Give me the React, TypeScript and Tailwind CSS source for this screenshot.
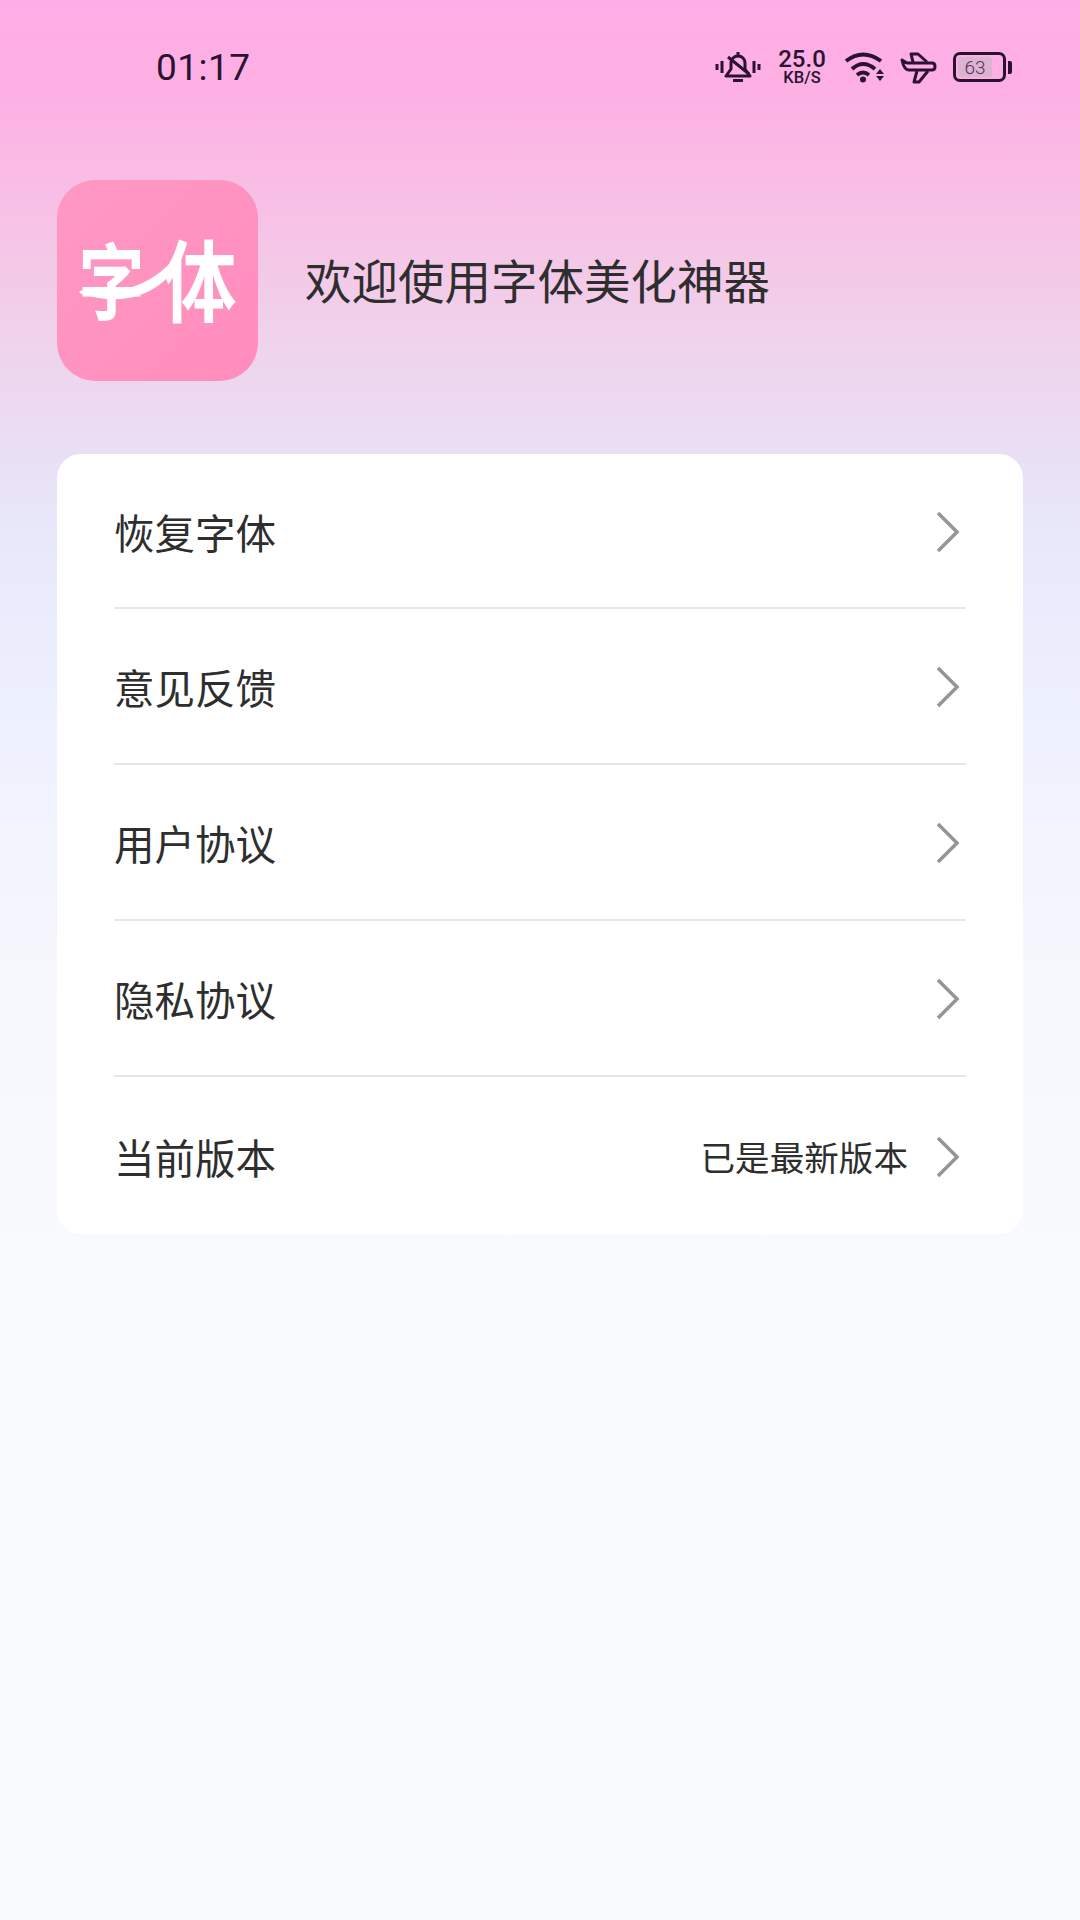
import React from 'react';

const cjk = { fontFamily: '"Noto Sans CJK SC", "Noto Sans", sans-serif' };

const Chevron = () => (
  <svg width="26" height="44" viewBox="0 0 26 44" fill="none" className="shrink-0">
    <path d="M3 3 L22 22 L3 41" stroke="#959595" strokeWidth="3.5" />
  </svg>
);

const rows = ['恢复字体', '意见反馈', '用户协议', '隐私协议'];

const Row = ({ label, value, className }: { label: string; value?: string; className: string }) => (
  <div className={`flex items-center justify-between pt-[3px] ${className}`}>
    <span className="text-[40.5px] leading-none text-[#2e2e2e]">{label}</span>
    <div className="flex items-center gap-[27px] pr-[5px]">
      {value && <span className="text-[34.6px] leading-none text-[#2e2e2e]">{value}</span>}
      <Chevron />
    </div>
  </div>
);

const StatusIcons = () => (
  <div className="flex items-center text-[#2a1330]">
    {/* muted bell */}
    <svg width="47" height="32" viewBox="0 0 47 32" fill="none" stroke="#2a1330" strokeWidth="3">
      <path d="M3 13v6M8 10v12M40 10v12M45 13v6" />
      <path d="M12 25h24l-5-7v-6c0-4-3-7-7-7s-7 3-7 7v6z" strokeLinejoin="round" />
      <path d="M14 6 L35 23" />
      <path d="M24 1v3M19 29.500h10" />
    </svg>
    <div className="ml-[16px] flex w-[50px] flex-col items-center font-['Roboto',sans-serif]">
      <span className="text-[24px] leading-[19px] font-medium">25.0</span>
      <span className="mt-[2px] text-[16.500px] leading-[14px] font-medium">KB/S</span>
    </div>
    {/* wifi */}
    <svg className="ml-[17px]" width="41" height="34" viewBox="0 0 41 34" fill="none" stroke="#2a1330" strokeWidth="4">
      <path d="M2 11Q19 -2 37 11" />
      <path d="M8 19Q19 9 31 19" />
      <path d="M13 25Q19 20 25 25" />
      <circle cx="19" cy="29.500" r="3" fill="#2a1330" stroke="none" />
      <path d="M32 24l4-5 4 5zM32 26l4 5 4-5z" fill="#2a1330" stroke="none" />
    </svg>
    {/* airplane */}
    <svg className="ml-[15px]" width="38" height="34" viewBox="0 0 38 34" fill="none" stroke="#2a1330" strokeWidth="3" strokeLinejoin="round">
      <path d="M2 10l5 3h25c4 0 4 7 0 7H9c-4 0-6-5-7-10z" />
      <path d="M13 12L11 4h7l9 8" />
      <path d="M17 21l-3 11h5l9-11" />
    </svg>
    {/* battery */}
    <div className="ml-[15px] flex items-center">
      <div className="flex h-[30px] w-[53px] items-center rounded-[7px] border-[3px] border-[#2a1330] p-[2px]">
        <div className="flex h-full w-[34px] items-center justify-center rounded-[2px] bg-[#dcb4d2] font-['Roboto',sans-serif] text-[19px] leading-none font-light text-[#5a2c58]">
          63
        </div>
      </div>
      <div className="ml-[2px] h-[13px] w-[4px] rounded-r-[2px] bg-[#2a1330]" />
    </div>
  </div>
);

export default function App() {
  return (
    <div
      style={cjk}
      className="flex h-[1920px] w-[1080px] flex-col overflow-hidden bg-[linear-gradient(180deg,#ffade6_0%,#fdb0e4_5%,#f6c4e6_12%,#efd3ec_18%,#e9e0f6_24%,#e8e8fb_28%,#eef1fe_38%,#f6f7fd_50%,#fafbfd_70%,#f9fbfd_100%)]"
    >
      <div className="flex h-[134px] items-center justify-between pl-[156px] pr-[68px]">
        <span className="font-['Roboto',sans-serif] text-[37px] leading-none tracking-[0.5px] text-[#2a1330]">01:17</span>
        <StatusIcons />
      </div>

      <div className="mt-[46px] flex items-center px-[57px]">
        <div className="relative flex h-[201px] w-[201px] items-center justify-center rounded-[38px] bg-[linear-gradient(135deg,#ff98c4,#ff8dbc)] pb-[8px]">
          <span className="mr-[18px] inline-block scale-y-[1.25] text-[66px] leading-none font-bold text-white">字</span>
          <span className="inline-block scale-y-[1.2] text-[74px] leading-none font-bold text-white">体</span>
          {/* brush stroke joining the two characters */}
          <svg className="absolute inset-0" width="201" height="201" viewBox="0 0 201 201" fill="none">
            <path d="M24 112C62 120 102 104 124 72C112 108 72 128 24 112Z" fill="#fff" stroke="#fff" strokeWidth="3" strokeLinejoin="round" />
          </svg>
        </div>
        <span className="mb-[2px] ml-[47px] text-[46.500px] leading-none text-[#2e2e2e]">欢迎使用字体美化神器</span>
      </div>

      <div className="mx-[57px] mt-[73px] rounded-[24px] bg-white pl-[57px] pr-[57px]">
        {rows.map((r, i) => (
          <Row key={r} label={r} className={`border-b-2 border-[#e6e6ea] ${i === 0 ? 'h-[154.500px]' : 'h-[156px]'}`} />
        ))}
        <Row label="当前版本" value="已是最新版本" className="h-[157.500px]" />
      </div>
    </div>
  );
}
